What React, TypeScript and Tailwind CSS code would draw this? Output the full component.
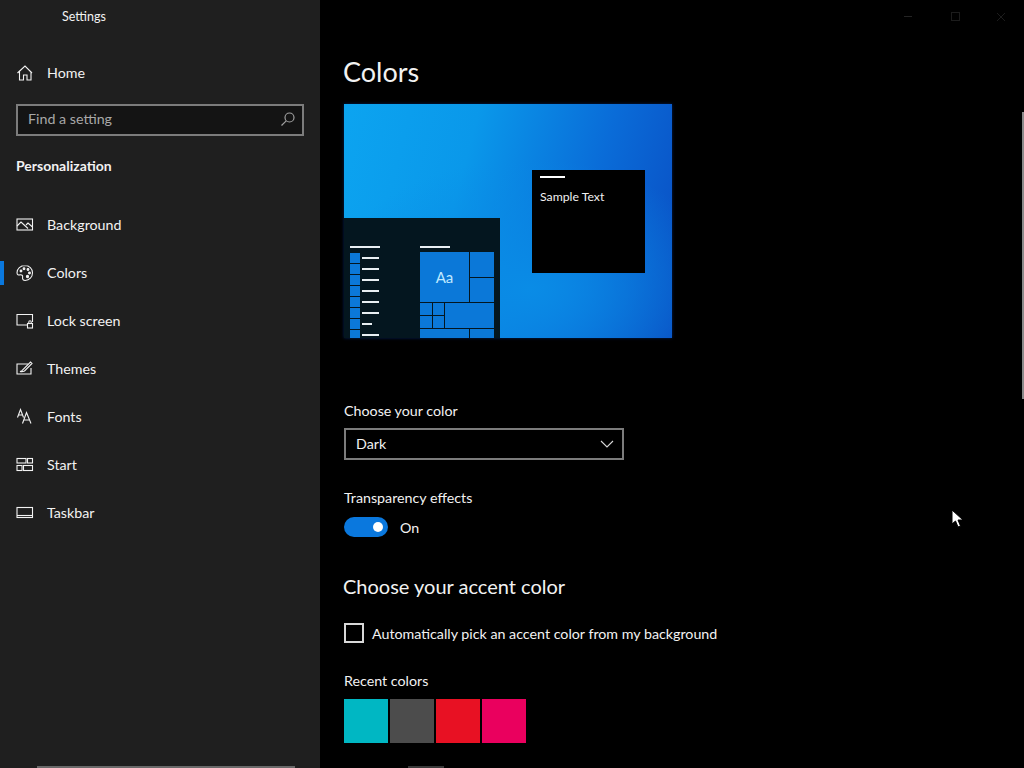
import React from "react";

const font = { fontFamily: 'Lato, "Open Sans", sans-serif' };

const Ic = ({ children }: { children: React.ReactNode }) => (
  <svg width="18" height="18" viewBox="0 0 18 18" fill="none" stroke="#f2f2f2" strokeWidth="1.1" className="shrink-0">
    {children}
  </svg>
);

const icons: Record<string, React.ReactNode> = {
  Home: (
    <Ic>
      <path d="M1.500 9 9 2l7 7M3.500 7.500V16h4v-5h3.500v5h4V7.500" />
    </Ic>
  ),
  Background: (
    <Ic>
      <rect x="1" y="3" width="15.500" height="11" />
      <path d="M1 10l4-4 7 6.500M10 9l2-2 4.500 4" />
    </Ic>
  ),
  Colors: (
    <Ic>
      <path d="M9 1.500c-4.500 0-8 3.200-8 7.200 0 2 1.500 2.500 3 2.200 1.800-.4 3 .5 2.600 2.300-.4 1.900.6 3.300 2.600 3.300 4.200 0 7.300-3.500 7.300-7.800 0-4.200-3.200-7.200-7.500-7.200z" />
      <circle cx="5" cy="7" r=".9" fill="#f2f2f2" />
      <circle cx="8" cy="4.800" r=".9" fill="#f2f2f2" />
      <circle cx="12" cy="5.500" r=".9" fill="#f2f2f2" />
      <circle cx="13.500" cy="9" r=".9" fill="#f2f2f2" />
      <circle cx="11.500" cy="12.500" r="1.100" fill="#f2f2f2" />
    </Ic>
  ),
  "Lock screen": (
    <Ic>
      <path d="M11 13H1V2.500h15.500V10" />
      <rect x="11.500" y="11.500" width="5" height="4.500" />
      <path d="M12.800 11.500V10a1.200 1.200 0 0 1 2.400 0v1.500" />
    </Ic>
  ),
  Themes: (
    <Ic>
      <path d="M12 4H1v10h14V8" />
      <path d="M4 11.500c2-.2 2.500-1 3-2L14.500 2l1.500 1.500L8.500 11c-1 .5-2.500 1-4.500.5z" />
    </Ic>
  ),
  Fonts: (
    <svg width="18" height="18" viewBox="0 0 18 18" fill="none" stroke="#f2f2f2" strokeWidth="1.100" className="shrink-0">
      <path d="M1.500 9.500 4.500 1.500l3 8M2.600 7h3.800M6.500 15.500l4-11 4.500 11M7.800 12h5.800" />
    </svg>
  ),
  Start: (
    <Ic>
      <rect x="1" y="2.500" width="9" height="4.500" />
      <rect x="11.500" y="2.500" width="5" height="4.500" />
      <rect x="1" y="9.500" width="5" height="5" />
      <rect x="7.500" y="9.500" width="9" height="5" />
    </Ic>
  ),
  Taskbar: (
    <Ic>
      <rect x="1" y="3.500" width="15.500" height="10" />
      <path d="M1 11.500h15.500" />
    </Ic>
  ),
};

const NavItem = ({ label, active }: { label: string; active?: boolean }) => (
  <div className="relative flex h-12 items-center pl-4 text-[14.250px] text-[#f2f2f2]">
    {active && <div className="absolute left-0 top-3 h-6 w-1 bg-[#0a78de]" />}
    <span className="w-[31px]">{icons[label]}</span>
    <span>{label}</span>
  </div>
);

const Sidebar = () => (
  <aside className="relative flex h-[768px] w-80 shrink-0 flex-col bg-[#1f1f1f]" style={font}>
    <div className="flex h-[34px] items-center pl-[62px] text-[12.500px] text-[#f2f2f2]">Settings</div>
    <div className="mt-[15px] flex h-12 items-center pl-4 text-[14.250px] text-[#f2f2f2]">
      <span className="w-[31px]">{icons.Home}</span>
      <span>Home</span>
    </div>
    <div className="mx-4 mt-[7px] flex h-8 items-center justify-between border-2 border-[#7c7c7c] bg-[#141414] pb-[2px] pl-2.5 pr-1.5 text-[14.250px] text-[#a8a8a8]">
      <span>Find a setting</span>
      <svg width="16" height="16" viewBox="0 0 16 16" fill="none" stroke="#a0a0a0" strokeWidth="1.200">
        <circle cx="9.500" cy="6.500" r="4.500" />
        <path d="M6.200 9.800 1.500 14.500" />
      </svg>
    </div>
    <div className="mt-[20px] h-[20px] pl-4 text-[14px] leading-5 font-bold text-[#f2f2f2]">Personalization</div>
    <div className="mt-[25px] flex flex-col">
      <NavItem label="Background" />
      <NavItem label="Colors" active />
      <NavItem label="Lock screen" />
      <NavItem label="Themes" />
      <NavItem label="Fonts" />
      <NavItem label="Start" />
      <NavItem label="Taskbar" />
    </div>
    <div className="absolute bottom-0 left-[37px] h-[2px] w-[258px] bg-[#6a6a6a]" />
  </aside>
);

const Bars = ({ count }: { count: number }) => (
  <div className="flex flex-col">
    {Array.from({ length: count }).map((_, i) => (
      <div key={i} className="flex h-[11px] items-center gap-[2px]">
        <div className="h-[10px] w-[10px] bg-[#0b78d8]" />
        <div className={i === 6 ? "h-[2px] w-[10px] bg-[#e8eef2]" : "h-[2px] w-[17px] bg-[#e8eef2]"} />
      </div>
    ))}
  </div>
);

const Preview = () => (
  <div
    className="relative mt-[14px] h-[234px] w-[328px] overflow-hidden shadow-[0_0_3px_0_#04205a]"
    style={{
      background:
        "radial-gradient(ellipse 200px 130px at 185px 185px, #0a8ce6 0%, rgba(10,140,230,0) 100%), linear-gradient(105deg, #0ca4f0 0%, #0a98ea 35%, #0a6cd8 70%, #0a4cc2 100%)",
    }}
  >
    <div className="absolute left-[188px] top-[66px] h-[103px] w-[113px] bg-black px-2 pt-[6px] text-[12.250px] text-[#f2f2f2]">
      <div className="h-[2px] w-[25px] bg-white" />
      <div className="mt-[9px] leading-5">Sample Text</div>
    </div>
    <div className="absolute bottom-0 left-0 flex h-[120px] w-[156px] gap-[5px] bg-[#04161f] pl-[6px] pt-[27px]">
      <div className="w-[65px]">
        <div className="mt-px h-[2px] w-[30px] bg-[#e8eef2]" />
        <div className="mt-[4px]">
          <Bars count={8} />
        </div>
      </div>
      <div className="w-[74px]">
        <div className="mt-px h-[2px] w-[30px] bg-[#e8eef2]" />
        <div className="mt-[4px] grid grid-cols-[49px_24px] gap-px">
          <div className="flex h-[50px] items-center justify-center bg-[#0b78d8] text-[15px] text-[#bfe8ff]">Aa</div>
          <div className="flex h-[50px] flex-col gap-px">
            <div className="h-[25px] bg-[#0b78d8]" />
            <div className="h-[24px] bg-[#0b78d8]" />
          </div>
          <div className="col-span-2 flex h-[25px] gap-px">
            <div className="grid w-[24px] grid-cols-[12px_11px] grid-rows-2 gap-px">
              <div className="bg-[#0b78d8]" />
              <div className="bg-[#0b78d8]" />
              <div className="bg-[#0b78d8]" />
              <div className="bg-[#0b78d8]" />
            </div>
            <div className="flex-1 bg-[#0b78d8]" />
          </div>
          <div className="h-[12px] bg-[#0b78d8]" />
          <div className="h-[12px] bg-[#0b78d8]" />
        </div>
      </div>
    </div>
  </div>
);

const swatches = ["bg-[#00b7c3]", "bg-[#4c4c4c]", "bg-[#e81123]", "bg-[#ea005e]"];

const Main = () => (
  <main className="relative h-[768px] flex-1 overflow-hidden bg-black pl-6 text-[14.250px] text-[#f2f2f2]" style={font}>
    <h1 className="mt-[53px] -ml-px h-[37px] text-[27px] leading-[37px] font-normal">Colors</h1>
    <Preview />
    <div className="mt-[63px] h-5 leading-5">Choose your color</div>
    <div className="mt-[7px] flex h-8 w-[280px] items-center justify-between border-2 border-[#7c7c7c] pl-2.5 pr-2">
      <span>Dark</span>
      <svg width="14" height="14" viewBox="0 0 14 14" fill="none" stroke="#d8d8d8" strokeWidth="1.100">
        <path d="M1 4l6 6 6-6" />
      </svg>
    </div>
    <div className="mt-[28px] h-5 leading-5">Transparency effects</div>
    <div className="mt-[9px] flex h-5 items-center gap-3">
      <div className="flex h-5 w-11 items-center justify-end rounded-full bg-[#0a78de] pr-[5px]">
        <div className="h-[10px] w-[10px] rounded-full bg-white" />
      </div>
      <span className="pt-[2px]">On</span>
    </div>
    <h2 className="mt-[35px] -ml-px h-7 text-[20px] leading-7 font-normal">Choose your accent color</h2>
    <div className="mt-[23px] flex h-5 items-center gap-2">
      <div className="h-5 w-5 border-2 border-[#d8d8d8]" />
      <span className="pt-[2px]">Automatically pick an accent color from my background</span>
    </div>
    <div className="mt-[28px] h-5 leading-5">Recent colors</div>
    <div className="mt-2 flex gap-[2px]">
      {swatches.map((s) => (
        <div key={s} className={`h-11 w-11 ${s}`} />
      ))}
    </div>
    <div className="absolute bottom-0 left-[88px] h-[2px] w-9 bg-[#3a3a3a]" />
    <div className="absolute right-0 top-[112px] h-[287px] w-[2px] bg-[#8a8a8a]" />
    <div className="absolute right-[112px] top-[16px] h-px w-2 bg-[#242424]" />
    <div className="absolute right-[64px] top-[12px] h-[9px] w-[9px] border border-[#1c1c1c]" />
    <svg className="absolute right-[18px] top-[12px]" width="10" height="10" viewBox="0 0 10 10" stroke="#1c1c1c">
      <path d="M1 1l8 8M9 1 1 9" />
    </svg>
    <svg className="absolute left-[631px] top-[509px]" width="13" height="19" viewBox="0 0 13 19">
      <path d="M1 1v14l3.500-3 2.500 6 2.500-1-2.500-6H12z" fill="#fff" stroke="#000" strokeWidth="1" />
    </svg>
  </main>
);

export default function App() {
  return (
    <div className="flex h-[768px] w-[1024px] overflow-hidden">
      <Sidebar />
      <Main />
    </div>
  );
}
